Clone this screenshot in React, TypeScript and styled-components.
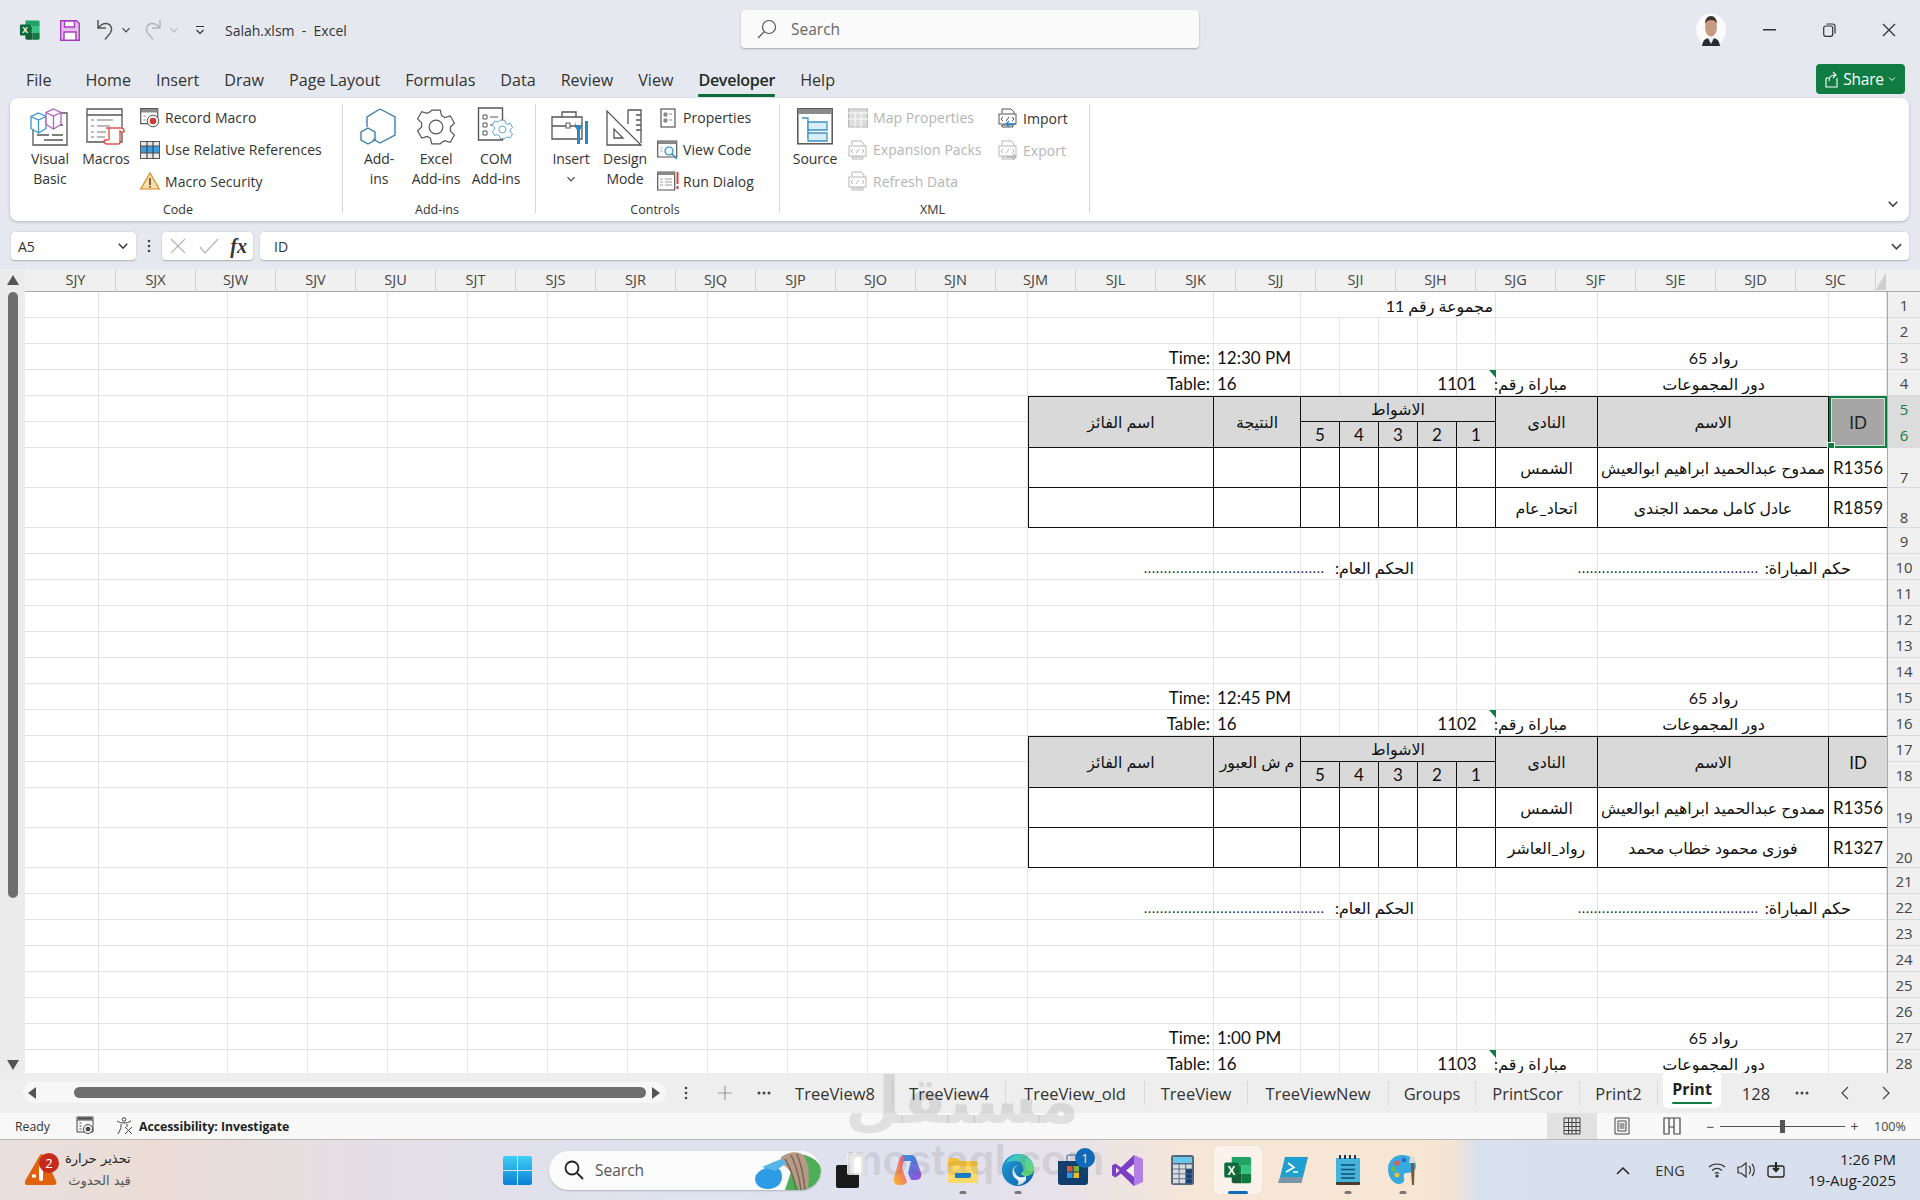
import React from 'react';
import styled, { createGlobalStyle } from 'styled-components';

const UI = `"Open Sans","DejaVu Sans",sans-serif`;
const CELL = `Lato,"DejaVu Sans",sans-serif`;

const Global = createGlobalStyle`
  html, body { margin: 0; padding: 0; background: #e6e8ef; }
  * { box-sizing: border-box; }
`;

const Page = styled.div`
  position: relative; width: 1920px; height: 1200px; overflow: hidden;
  background: #e6e8ef; font-family: ${UI}; color: #222; display: flex; flex-direction: column;
`;

/* ---------- Title bar ---------- */
const TitleBar = styled.div`
  height: 58px; display: grid; grid-template-columns: 741px 458px 1fr; align-items: center; flex: none; padding-top: 2px;
`;
const Qat = styled.div`display: flex; align-items: center; padding-left: 18px; height: 100%;`;
const QatSlot = styled.div<{ $w: number }>`width: ${p => p.$w}px; display: flex; align-items: center; justify-content: center; flex: none;`;
const DocTitle = styled.div`font-size: 14px; color: #333; white-space: pre; margin-left: 16px; letter-spacing: 0;`;
const SearchBox = styled.div`
  height: 38px; margin-top: -2px; background: #fafafa; border-radius: 4px; box-shadow: 0 1px 2px rgba(0,0,0,.28);
  display: flex; align-items: center; padding-left: 16px; gap: 14px; font-size: 15.5px; color: #666;
`;
const WinControls = styled.div`display: flex; align-items: center; justify-content: flex-end; height: 100%; padding-right: 0;`;
const WinBtn = styled.div<{ $w: number }>`width: ${p => p.$w}px; display: flex; align-items: center; justify-content: center; flex: none;`;

/* ---------- Ribbon tabs ---------- */
const TabRow = styled.div`height: 40px; display: flex; align-items: center; padding-left: 26px; position: relative; flex: none;`;
const RTab = styled.div<{ $active?: boolean; $ml?: number }>`
  font-size: 16.1px; margin-left: ${p => p.$ml ?? 25}px; position: relative; height: 40px; line-height: 44px;
  color: ${p => (p.$active ? '#1e2b24' : '#333')}; font-weight: ${p => (p.$active ? 600 : 400)}; letter-spacing: ${p => (p.$active ? '-.3px' : '0')};
  &::after { content: ''; display: ${p => (p.$active ? 'block' : 'none')}; position: absolute; left: 0; right: 0; bottom: 1px; height: 3px; background: #0e6b3b; border-radius: 1px; }
`;
const ShareBtn = styled.div`
  position: absolute; left: 1816px; top: 6px; width: 89px; height: 30px; background: #107c41; border-radius: 4px; color: #fff;
  display: flex; align-items: center; justify-content: center; gap: 4px; font-size: 15.5px; letter-spacing: -.2px;
`;

/* ---------- Ribbon ---------- */
const Ribbon = styled.div`
  margin-left: 10px; width: 1899px; height: 123px; background: #fff; border-radius: 8px; box-shadow: 0 1px 3px rgba(0,0,0,.22);
  display: flex; padding-top: 6px; position: relative; flex: none;
`;
const Group = styled.div<{ $w: number; $pl: number }>`
  width: ${p => p.$w}px; height: 109px; border-right: 1px solid #d8d8d8; padding-left: ${p => p.$pl}px; display: flex; flex-direction: column; flex: none;
`;
const Tools = styled.div`display: flex; height: 91px;`;
const GroupLabel = styled.div<{ $mr: number }>`
  margin-top: auto; margin-bottom: -6px; margin-right: ${p => p.$mr}px; text-align: center; font-size: 12.5px; line-height: 18px; color: #333;
`;
const Big = styled.div<{ $w: number }>`width: ${p => p.$w}px; display: flex; flex-direction: column; align-items: center; flex: none;`;
const BigIcon = styled.div`height: 45px; display: flex; align-items: center; justify-content: center;`;
const BigLabel = styled.div`font-size: 14px; line-height: 20px; text-align: center; white-space: nowrap; color: #333; letter-spacing: -.1px;`;
const SmallCol = styled.div<{ $w?: number; $ml?: number }>`
  display: flex; flex-direction: column; gap: 4px; margin-left: ${p => p.$ml ?? 0}px; width: ${p => (p.$w ? p.$w + 'px' : 'auto')}; flex: none;
`;
const Small = styled.div<{ $off?: boolean }>`
  height: 28px; display: flex; align-items: center; gap: 3px; font-size: 14px; white-space: nowrap; letter-spacing: .05px;
  color: ${p => (p.$off ? '#b4b4b4' : '#333')};
`;
const SmallIcon = styled.div`width: 24px; display: flex; align-items: center; justify-content: center; flex: none;`;
const Collapse = styled.div`position: absolute; right: 10px; bottom: 11px; display: flex;`;

/* ---------- Formula bar ---------- */
const FormulaRow = styled.div`height: 28px; margin: 11px 0 9px 11px; display: flex; align-items: stretch; flex: none;`;
const Boxed = styled.div<{ $w?: number }>`
  background: #fff; border-radius: 4px; box-shadow: 0 0.5px 1.5px rgba(0,0,0,.25); display: flex; align-items: center;
  width: ${p => (p.$w ? p.$w + 'px' : 'auto')}; flex: ${p => (p.$w ? 'none' : 1)};
`;
const NameBox = styled(Boxed)`padding: 0 7px; justify-content: space-between; font-size: 14px; color: #333;`;
const FxBox = styled(Boxed)`justify-content: space-between; padding: 0 6px 0 7px;`;
const FormulaInput = styled(Boxed)`margin-left: 7px; margin-right: 11px; padding: 0 6px 0 14px; justify-content: space-between; font-size: 14px; color: #333;`;
const VDots = styled.div`width: 26px; display: flex; align-items: center; justify-content: center;`;
const Fx = styled.span`font-family: "Liberation Serif",serif; font-style: italic; font-size: 20px; color: #333; font-weight: 700;`;

/* ---------- Sheet ---------- */
const Workbook = styled.div`height: 804px; display: flex; flex: none; background: #f0f0f0;`;
const VScroll = styled.div`width: 25px; flex: none; display: flex; flex-direction: column; align-items: center; padding: 6px 0 3px; position: relative; background: #ececec;`;
const VThumb = styled.div`width: 10px; height: 606px; margin-top: 7px; background: #6e6e6e; border-radius: 5px;`;
const VGrow = styled.div`flex: 1;`;
const SheetMain = styled.div`flex: 1; display: flex; flex-direction: column; min-width: 0;`;
const ColHeads = styled.div`height: 23px; display: flex; padding-left: 11px; background: #f0f0f0; border-bottom: 1px solid #aaa; flex: none; position: relative;`;
const ColHead = styled.div`width: 80px; border-right: 1px solid #d2d2d2; text-align: center; font-size: 14.5px; line-height: 22px; color: #444; flex: none;`;
const Corner = styled.div`width: 0; height: 0; margin: 3px 0 0 0; border-style: solid; border-width: 0 0 18px 10px; border-color: transparent transparent #cfcfcf transparent;`;
const Body = styled.div`flex: 1; display: flex; overflow: hidden;`;
const Grid = styled.div`
  width: 1862px; flex: none; background: #fff; display: grid; height: 781px; overflow: hidden; font-family: ${CELL}; color: #111;
  grid-template-columns: 74px 129px repeat(10, 80px) 186px 87px repeat(5, 39px) 102px 231px 58px;
  grid-template-rows: repeat(6, 26px) 40px 40px repeat(10, 26px) 40px 40px repeat(8, 26px);
`;
type Pos = { $c: number; $r: number; $cs?: number; $rs?: number };
const at = (p: Pos) => `grid-column: ${p.$c} / span ${p.$cs ?? 1}; grid-row: ${p.$r} / span ${p.$rs ?? 1};`;
const Line = styled.div<Pos>`${at} border-right: 1px solid #e3e3e3; border-bottom: 1px solid #e3e3e3;`;
const Blank = styled.div<Pos>`${at} background: #fff; border-right: 1px solid #e3e3e3; border-bottom: 1px solid #e3e3e3;`;
const Txt = styled.div<Pos & { $a?: string; $pr?: number; $pl?: number; $ar?: boolean }>`
  ${at} display: flex; align-items: center; white-space: nowrap; min-width: 0; position: relative;
  justify-content: ${p => p.$a ?? 'center'}; padding-right: ${p => p.$pr ?? 0}px; padding-left: ${p => p.$pl ?? 0}px; padding-top: 1px;
  font-size: ${p => (p.$ar ? 16 : 17)}px; ${p => (p.$ar ? 'direction: rtl;' : '')}
`;
const Tc = styled.div<Pos & { $head?: boolean; $left?: boolean; $top?: boolean; $ar?: boolean; $nb?: boolean }>`
  ${at} display: flex; align-items: center; justify-content: center; white-space: nowrap; overflow: hidden; position: relative;
  background: ${p => (p.$head ? '#d9d9d9' : '#fff')}; border-right: ${p => (p.$nb ? 0 : '1px solid #111')}; border-bottom: 1px solid #111;
  ${p => (p.$left ? 'border-left: 1px solid #111;' : '')} ${p => (p.$top ? 'border-top: 1px solid #111;' : '')}
  font-size: ${p => (p.$ar ? 15.8 : 17)}px; ${p => (p.$ar ? 'direction: rtl;' : '')}
`;
const SelCell = styled.div<Pos>`
  ${at} position: relative; background: #a6a6a6; border: 2px solid #107c41; outline: 1px solid #cfe3d8; outline-offset: -3px; display: flex; align-items: center; justify-content: center; font-size: 17px; color: #222;
`;
const Handle = styled.span`position: absolute; left: -4px; bottom: -4px; width: 6px; height: 6px; background: #107c41; border: 1px solid #fff; box-sizing: content-box;`;
const Flag = styled.span`
  position: absolute; right: 0; top: 0; width: 0; height: 0; border-style: solid; border-width: 0 7px 8px 0; border-color: transparent #107c41 transparent transparent;
`;
const Dots = styled.span`font-family: ${CELL}; font-size: 13px; letter-spacing: .95px; direction: ltr;`;
const RowHeads = styled.div`width: 33px; flex: none; border-left: 1px solid #aaa; background: #f0f0f0; display: flex; flex-direction: column;`;
const RowHead = styled.div<{ $h: number; $sel?: boolean }>`
  height: ${p => p.$h}px; flex: none; display: flex; justify-content: center; font-size: 15px; color: ${p => (p.$sel ? '#107c41' : '#444')};
  align-items: ${p => (p.$h > 30 ? 'flex-end' : 'center')}; border-bottom: 1px solid #dadada; background: ${p => (p.$sel ? '#dcdcdc' : 'transparent')}; letter-spacing: -.2px;
`;

/* ---------- Sheet tabs ---------- */
const TabBar = styled.div`height: 40px; background: #efeeee; display: flex; align-items: flex-start; flex: none; position: relative;`;
const HPill = styled.div`
  margin: 9px 0 0 23px; width: 643px; height: 21px; background: #f7f7f7; border-radius: 10px; display: flex; align-items: center; padding: 0 3px 0 5px; gap: 0; flex: none;
`;
const HThumb = styled.div`width: 572px; height: 11px; background: #6e6e6e; border-radius: 6px; margin: 0 6px 0 38px;`;
const BarTool = styled.div<{ $w: number }>`width: ${p => p.$w}px; height: 40px; display: flex; align-items: center; justify-content: center; flex: none;`;
const TabList = styled.div`display: flex; align-items: flex-start; margin-left: -6px; flex: none;`;
const SheetTab = styled.div<{ $w: number; $active?: boolean; $nob?: boolean }>`
  width: ${p => p.$w}px; flex: none; height: ${p => (p.$active ? '35px' : '24px')}; margin-top: ${p => (p.$active ? '0' : '8px')};
  border-right: ${p => (p.$active || p.$nob ? '0' : '1px solid #dadada')};
  display: flex; justify-content: center; align-items: center; font-size: 16.5px; color: #333; white-space: nowrap; position: relative;
  ${p => p.$active ? 'background: #fff; font-weight: 700; font-size: 16px; color:#222; border-radius: 0 0 5px 5px; padding-bottom: 3px; width:58px; margin: 0 6px 0 5px;' : ''}
  ${p => p.$active ? `&::after { content:''; position:absolute; left:9px; right:9px; bottom:4px; height:2.5px; background:#107c41; border-radius:1px; }` : ''}
`;

/* ---------- Status bar ---------- */
const StatusBar = styled.div`
  height: 27px; background: #f8f8f8; border-bottom: 1px solid #bdb7b2; display: flex; align-items: center; flex: none; font-size: 12.3px; color: #333; position: relative;
`;
const Ready = styled.span`margin-left: 15px; width: 55px;`;
const StatusIco = styled.div<{ $w: number }>`width: ${p => p.$w}px; display: flex; align-items: center; justify-content: center; flex: none; height: 26px;`;
const Acc = styled.span`font-weight: 700; color: #222; letter-spacing: -.03px; margin-left: 3px;`;
const StatusRight = styled.div`margin-left: auto; display: flex; align-items: center; height: 26px;`;
const ViewBtn = styled.div<{ $active?: boolean }>`
  width: 50px; height: 26px; display: flex; align-items: center; justify-content: center; background: ${p => (p.$active ? '#e2e2e2' : 'transparent')}; flex: none;
`;
const Zoomer = styled.div`margin-left: 4px; display: flex; align-items: center; flex: none; color: #444; font-size: 14px;`;
const ZoomMark = styled.span`width: 19px; text-align: center; flex: none;`;
const Track = styled.div`width: 125px; height: 1px; background: #555; position: relative; flex: none;`;
const Knob = styled.span`position: absolute; left: 60px; top: -6px; width: 5px; height: 13px; background: #555;`;
const ZoomPct = styled.span`width: 46px; margin-left: 10px; font-size: 12.5px; color: #444; white-space: nowrap;`;

/* ---------- Taskbar ---------- */
const Taskbar = styled.div`
  height: 60px; flex: none; display: flex; align-items: center;
  background: linear-gradient(90deg, #e9dfdc 0%, #ebdcd6 8%, #e2dfe8 22%, #dfe2ef 35%, #e0e1ee 48%, #e6e2ea 55%, #f6e6d8 62%, #f7e6d2 74%, #f4e4d4 75.5%, #d9e0ee 77%, #d7dfec 100%);
  position: relative;
`;
const Weather = styled.div`width: 490px; flex: none; display: flex; align-items: center; padding-left: 25px; gap: 10px;`;
const WeatherIcon = styled.div`position: relative; width: 30px; height: 38px; flex: none;`;
const Badge = styled.span<{ $bg: string }>`
  position: absolute; display: flex; align-items: center; justify-content: center; width: 20px; height: 20px; border-radius: 50%;
  background: ${p => p.$bg}; color: #fff; font-size: 13px; line-height: 1;
`;
const RedBadge = styled(Badge)`left: 14px; top: 2px;`;
const BlueBadge = styled(Badge)`position: absolute !important; right: 5px; top: 2px;`;
const WeatherText = styled.div`direction: rtl; display: flex; flex-direction: column; font-family: "DejaVu Sans",sans-serif; font-size: 13px; line-height: 22px; color: #222; text-align: right;`;
const WeatherSub = styled.span`color: #555;`;
const SearchPill = styled.div`
  margin-left: 4px; width: 272px; height: 39px; border-radius: 20px; box-shadow: 0 1px 2px rgba(0,0,0,.2); display: flex; align-items: center; padding-left: 15px; gap: 11px;
  font-size: 15.5px; color: #555; position: relative; overflow: hidden; flex: none; background: #fbfbfc;
`;
const PillArt = styled.div`position: absolute; right: 0; top: 0; height: 39px; display: flex;`;
const Slot = styled.div<{ $active?: boolean; $w?: number }>`
  width: ${p => p.$w ?? 55}px; height: 48px; flex: none; display: flex; align-items: center; justify-content: center; position: relative;
  ${p => p.$active ? `&::before { content:''; position:absolute; left:3.5px; right:3.5px; top:0; bottom:0; background: rgba(255,255,255,.5); border-radius:5px; box-shadow:0 0 1px rgba(0,0,0,.15);} ` : ''}
  & > svg { position: relative; }
`;
const Pip = styled.span<{ $on?: boolean }>`
  position: absolute; bottom: 0px; left: 50%; transform: translateX(-50%); height: 3.5px; border-radius: 2px;
  width: ${p => (p.$on ? 20 : 7)}px; background: ${p => (p.$on ? '#0f6cbd' : '#777')};
`;
const Tray = styled.div`margin-left: auto; display: flex; align-items: center; padding-right: 24px; height: 100%;`;
const TrayItem = styled.div<{ $w: number }>`width: ${p => p.$w}px; display: flex; justify-content: center; align-items: center; flex: none; font-size: 14.5px; color: #333;`;
const Clock = styled.div`width: 100px; margin-left: 5px; text-align: right; font-size: 15px; line-height: 21px; color: #222; white-space: nowrap; direction: rtl;`;
const ClockLine = styled.div`direction: ltr; text-align: right; margin-left: -6px;`;

const Watermark = styled.div`
  position: absolute; left: 845px; top: 1062px; width: 232px; text-align: center; pointer-events: none; color: rgba(80,80,85,.14); font-weight: 700; white-space: nowrap;
`;
const WmAr = styled.div`font-family: "DejaVu Sans",sans-serif; font-size: 64px; line-height: 78px;`;
const WmEn = styled.div`font-family: "Liberation Sans",sans-serif; font-size: 42px; line-height: 42px;`;

/* ---------- Icons ---------- */
const G = '#555';
const Chevron = ({ c = '#444', s = 10 }: { c?: string; s?: number }) => (
  <svg width={s} height={s} viewBox="0 0 10 10"><path d="M1.5 3.2 5 6.8 8.5 3.2" fill="none" stroke={c} strokeWidth="1.2" /></svg>
);
const ExcelGlyph = ({ s = 22 }: { s?: number }) => (
  <svg width={s} height={s} viewBox="0 0 24 24">
    <path d="M7 1.5h14a1.5 1.5 0 0 1 1.5 1.5v5.5H7z" fill="#21a366" />
    <path d="M7 8.5h7.7V15H7z" fill="#107c41" /><path d="M14.7 8.5h7.8V15h-7.8z" fill="#33c481" />
    <path d="M14.7 15h7.8v6a1.5 1.5 0 0 1-1.5 1.5h-6.3z" fill="#107c41" /><path d="M7 15h7.7v7.5H8.5A1.5 1.5 0 0 1 7 21z" fill="#185c37" />
    <rect x="1" y="6" width="11.5" height="12" rx="1.2" fill="#0f6b3a" />
    <text x="6.75" y="15.6" fontSize="9.5" fontWeight="700" textAnchor="middle" fill="#fff" fontFamily="Liberation Sans">X</text>
  </svg>
);
const SaveIcon = () => (
  <svg width="20" height="21" viewBox="0 0 20 21">
    <path d="M.7.7h15.8l2.8 2.8v16.8H.7z" fill="#e6bdee" stroke="#a93cbc" strokeWidth="1.4" />
    <path d="M4.5 1h10v6h-10zM4 12h12v8.2H4z" fill="#fff" stroke="#a93cbc" strokeWidth="1.4" />
  </svg>
);
const Undo = ({ c, flip }: { c: string; flip?: boolean }) => (
  <svg width="20" height="24" viewBox="0 0 20 24" style={flip ? { transform: 'scaleX(-1)' } : undefined}>
    <path d="M3 2v8h8M3 10c3-3.5 6-5 9-4.400 4 .9 6 5.400 3.500 9L10 21.500" fill="none" stroke={c} strokeWidth="1.500" />
  </svg>
);
const Cube = ({ x, y, c }: { x: number; y: number; c: string }) => (
  <g transform={`translate(${x} ${y})`} fill="none" stroke={c} strokeWidth="1.300">
    <path d="M7.500 0 15 3.500v12L7.500 20 0 15.500v-12z" fill="#fff" />
    <path d="M0 3.500 7.500 7 15 3.500M7.500 7v13" />
  </g>
);
const VbIcon = () => (
  <svg width="40" height="38" viewBox="0 0 40 38">
    <path d="M28 5h9v32H3V22M7 27h12M22 27h11M14 32h19M26 17h7" fill="none" stroke={G} strokeWidth="1.300" />
    <Cube x={1} y={5} c="#3a96c8" />
    <Cube x={16} y={1} c="#b25ec8" />
  </svg>
);
const MacrosIcon = () => (
  <svg width="40" height="38" viewBox="0 0 40 38">
    <path d="M1 1h35v33H1zM1 7h35" fill="none" stroke={G} strokeWidth="1.300" />
    <path d="M5 12h3M11 12h16M5 18h3M11 18h13M5 24h3M11 24h9M5 29h3M11 29h8" stroke="#777" strokeWidth="1.200" fill="none" />
    <path d="M20 20h15a3 3 0 0 1 3 3v1h-4v10a2 2 0 0 1-2 2H21a2.500 2.500 0 0 1-2.500-2.500V32h4" fill="#fff" stroke="#e0544d" strokeWidth="1.400" />
    <path d="M23 20v12M34 24v-2" stroke="#e0544d" strokeWidth="1.400" fill="none" />
  </svg>
);
const RecordIcon = () => (
  <svg width="20" height="20" viewBox="0 0 20 20">
    <path d="M.7.7h17v15H.7z" fill="#fff" stroke={G} strokeWidth="1.200" />
    <path d="M1 1h16.500v3.500H1z" fill="#8a8a8a" />
    <path d="M3.500 8h2M3.500 12h2" stroke="#777" strokeWidth="1.200" />
    <circle cx="13" cy="13" r="5.800" fill="#fff" stroke={G} strokeWidth="1" /><circle cx="13" cy="13" r="3.300" fill="#d43a3a" />
  </svg>
);
const RelIcon = () => (
  <svg width="20" height="18" viewBox="0 0 20 18">
    <rect x=".5" y=".5" width="19" height="17" fill="#3b9ce0" stroke="#555" />
    <path d="M.5 5h19v-4.500H.5zM.5 12h19v5.500H.5z" fill="#e8e8e8" stroke="#555" />
    <path d="M7 0v18M13 0v18" stroke="#333" strokeWidth="1" />
  </svg>
);
const WarnIcon = () => (
  <svg width="20" height="18" viewBox="0 0 20 18">
    <path d="M10 1 19.300 17H.7z" fill="#fcdca8" stroke="#d98a1f" strokeWidth="1.200" />
    <path d="M10 6v7" stroke="#333" strokeWidth="1.400" /><circle cx="10" cy="14.800" r=".9" fill="#333" />
  </svg>
);
const AddinsIcon = () => (
  <svg width="38" height="38" viewBox="0 0 38 38" fill="none" stroke="#3c7fb1" strokeWidth="1.400">
    <path d="M20 1 35 9v18L20 35 13 31M7 19V9L20 1" />
    <path d="M8 20 15 24v8L8 36 1 32v-8z" />
  </svg>
);
const Gear = ({ s, c, sw = 1.2 }: { s: number; c: string; sw?: number }) => (
  <svg width={s} height={s} viewBox="0 0 36 36" fill="none" stroke={c} strokeWidth={sw * 36 / s}>
    <circle cx="18" cy="18" r="6.500" />
    <path d="M14 2h8l1.300 5.300 3 1.700 5.200-1.500 4 6.900-3.900 3.700v3.800l3.900 3.700-4 6.900-5.200-1.500-3 1.700L22 34h-8l-1.300-5.300-3-1.700-5.200 1.500-4-6.900 3.900-3.700v-3.800l-3.900-3.700 4-6.900 5.200 1.500 3-1.700z" />
  </svg>
);
function Gearish() {
  return (
    <g fill="#fff" stroke="#3c8fc4" strokeWidth="1.400" transform="scale(.58)">
      <path d="M14 2h8l1.300 5.300 3 1.700 5.200-1.500 4 6.900-3.900 3.700v3.800l3.900 3.700-4 6.900-5.200-1.500-3 1.700L22 34h-8l-1.300-5.300-3-1.700-5.200 1.500-4-6.900 3.900-3.700v-3.800l-3.900-3.700 4-6.900 5.200 1.500 3-1.700z" />
      <circle cx="18" cy="18" r="6" />
    </g>
  );
}
const ComIcon = () => (
  <svg width="38" height="40" viewBox="0 0 38 40">
    <path d="M1.500 1h24v32H1.500z" fill="#fff" stroke={G} strokeWidth="1.400" />
    <path d="M6 8h4v4H6zM6 16h4v4H6zM6 24h4v4H6z" fill="none" stroke={G} />
    <path d="M13 10h8M13 18h4" stroke={G} />
    <g transform="translate(15 12)"><Gearish /></g>
  </svg>
);
const InsertIcon = () => (
  <svg width="40" height="38" viewBox="0 0 40 38">
    <path d="M1 9h30v22H1zM1 18h14M19 18h10M11 9V4h14v5" fill="none" stroke={G} strokeWidth="1.300" />
    <rect x="15" y="15" width="4" height="5" fill="#fff" stroke={G} />
    <path d="M24 14v5l2 3v14h3V22l2-3v-5l-1 3h-5z" fill="#2f86c5" />
    <path d="M34 13h3v9h-3zM34 22h3v14h-3z" fill="#2f86c5" />
  </svg>
);
const DesignIcon = () => (
  <svg width="38" height="38" viewBox="0 0 38 38" fill="none" stroke={G} strokeWidth="1.300">
    <path d="M1 3v34h34zM8 21v9h9z" />
    <path d="M22 2h13v33M22 2v14" />
    <path d="M30 7h5M30 12h5M30 17h5M30 22h5" />
  </svg>
);
const PropIcon = () => (
  <svg width="16" height="20" viewBox="0 0 16 20">
    <rect x="1" y="1" width="14" height="18" fill="#fff" stroke={G} strokeWidth="1.200" />
    <path d="M4 5h3v3H4zM4 11h3v3H4zM9 6h3M9 12h3" fill="#888" stroke="#888" />
  </svg>
);
const ViewCodeIcon = () => (
  <svg width="22" height="20" viewBox="0 0 22 20">
    <path d="M.7 1h19v16H.7z" fill="#fff" stroke={G} strokeWidth="1.200" /><path d="M1 1h18.500v3H1z" fill="#888" />
    <path d="M3.500 8h2M3.500 11h2" stroke="#999" />
    <circle cx="12" cy="11" r="4" fill="#eaf5fb" stroke="#2f86c5" strokeWidth="1.200" />
    <path d="M15 14l5 5" stroke="#2f86c5" strokeWidth="1.400" />
  </svg>
);
const RunIcon = () => (
  <svg width="22" height="20" viewBox="0 0 22 20">
    <path d="M.7 1h17v18H.7z" fill="#fff" stroke={G} strokeWidth="1.200" /><path d="M1 1h16.500v3H1z" fill="#888" />
    <path d="M3 8h3M8 8h7M3 11h3M8 11h7M3 14h3M8 14h7" stroke="#999" />
    <path d="M20.500 1v12" stroke="#d9433c" strokeWidth="2" /><path d="M20.500 15v3" stroke="#d9433c" strokeWidth="2" />
  </svg>
);
const SourceIcon = () => (
  <svg width="36" height="37" viewBox="0 0 36 37">
    <rect x=".8" y=".8" width="34.400" height="35" fill="#fff" stroke={G} strokeWidth="1.500" />
    <path d="M1 1h34v5H1z" fill="#8a8a8a" />
    <path d="M5 10h6v20" fill="none" stroke="#3f93c4" strokeWidth="1.300" />
    <path d="M11 14h19v8H11zM11 25h19v8H11z" fill="#d8eef8" stroke="#3f93c4" strokeWidth="1.300" />
  </svg>
);
const XmlDoc = ({ c, arrow, right }: { c: string; arrow?: string; right?: boolean }) => (
  <svg width="20" height="20" viewBox="0 0 20 20" fill="none" stroke={c}>
    <path d="M4 5V1h9l3 3v2" />
    <rect x="1" y="6" width="17" height="10" fill="#fff" />
    <path d="M5 9 3 11l2 2M14 9l2 2-2 2M8 13 11 9" />
    <path d="M4 17h11v2H4z" />
    {arrow && <path d={right ? 'M9 17h9m-3-3 3 3-3 3' : 'M8 16h10M8 16l3-3M8 16l3 3'} stroke={arrow} strokeWidth="1.300" />}
  </svg>
);
const MapIcon = () => (
  <svg width="20" height="20" viewBox="0 0 20 20">
    <rect x=".5" y="1" width="19" height="18" fill="#dcdcdc" stroke="#b5b5b5" />
    <path d="M0 5h20M7 5v14M13 5v14M0 11h20" stroke="#fff" />
  </svg>
);

const TaskWin = () => (
  <svg width="29" height="29" viewBox="0 0 29 29">
    <defs><linearGradient id="w" x1="0" y1="0" x2="0" y2="1"><stop offset="0" stopColor="#3fd0f4" /><stop offset="1" stopColor="#0b7fd6" /></linearGradient></defs>
    <path d="M0 1.500 1.500 0H14v14H0zM15 0h12.500L29 1.500V14H15zM0 15h14v14H1.500L0 27.500zM15 15h14v12.500L27.500 29H15z" fill="url(#w)" />
  </svg>
);
const MagIcon = ({ s = 20, flip, c = '#222', sw = 1.800 }: { s?: number; flip?: boolean; c?: string; sw?: number }) => (
  <svg width={s} height={s} viewBox="0 0 20 20" fill="none" stroke={c} strokeWidth={sw} style={flip ? { transform: 'scaleX(-1)' } : undefined}>
    <circle cx="8" cy="8" r="6.500" /><path d="M13 13l6 6" />
  </svg>
);
const BingArt = () => (
  <svg width="66" height="39" viewBox="0 0 66 39">
    <path d="M42 3c10 0 24 6 24 17 0 11-10 19-20 19H30z" fill="#4dae57" />
    <path d="M26 6c8-6 18-6 22-2 5 5 7 18 5 33l-9 2C40 28 36 18 26 12z" fill="#b79a85" />
    <path d="M36 4c4 8 8 20 10 35M42 3c4 10 7 24 8 36M30 8c5 8 9 19 11 31" stroke="#7a6557" strokeWidth="1.500" fill="none" />
    <path d="M1 24c-3 7 2 14 12 14 8 0 14-5 14-12 0-4-1-7-4-9C15 15 6 17 1 24z" fill="#2e9be6" />
    <path d="M7 16 26 8 32 12 20 20z" fill="#57b6e8" />
  </svg>
);
const TaskView = () => (
  <svg width="32" height="36" viewBox="0 0 32 36">
    <rect x="1" y="13" width="23" height="23" rx="2" fill="#1a1a1a" />
    <rect x="12" y="1" width="19" height="22" rx="2" fill="#f4f4f4" opacity=".9" /><rect x="15" y="4" width="13" height="17" fill="#fff" />
  </svg>
);
const Copilot = () => (
  <svg width="30" height="32" viewBox="0 0 30 32">
    <defs>
      <linearGradient id="c1" x1="0" y1="0" x2="1" y2="1"><stop offset="0" stopColor="#1d9be8" /><stop offset="1" stopColor="#a24fd8" /></linearGradient>
      <linearGradient id="c2" x1="0" y1="1" x2="1" y2="0"><stop offset="0" stopColor="#f8b92c" /><stop offset="1" stopColor="#f04f9a" /></linearGradient>
    </defs>
    <path d="M9 1h9c3 0 4 2 5 4l5 14c1 4-1 7-5 7h-5l-3-7 3-12H9z" fill="url(#c1)" />
    <path d="M6 6c1-3 3-5 6-4L9 14l5 14c-1 2-3 3-5 3H6c-4 0-6-3-5-7z" fill="url(#c2)" />
  </svg>
);
const Folder = () => (
  <svg width="30" height="26" viewBox="0 0 30 26">
    <path d="M0 3a2 2 0 0 1 2-2h8l3 3h15a2 2 0 0 1 2 2v18a2 2 0 0 1-2 2H2a2 2 0 0 1-2-2z" fill="#f6c43c" />
    <path d="M0 9h30v15a2 2 0 0 1-2 2H2a2 2 0 0 1-2-2z" fill="#fbd96a" />
    <path d="M7 16h16v3a2 2 0 0 1-2 2H7z" fill="#1a7dc4" />
  </svg>
);
const Edge = () => (
  <svg width="32" height="32" viewBox="0 0 32 32">
    <defs>
      <linearGradient id="e1" x1="0" y1="0" x2="1" y2="1"><stop offset="0" stopColor="#1e9fd8" /><stop offset="1" stopColor="#0b5fa8" /></linearGradient>
      <linearGradient id="e2" x1="0" y1="0" x2="1" y2="1"><stop offset="0" stopColor="#34c0d8" /><stop offset="1" stopColor="#6fdc6a" /></linearGradient>
    </defs>
    <circle cx="16" cy="16" r="16" fill="url(#e1)" />
    <path d="M3 11C6 3 13 0 18 0c8 0 14 7 14 15 0 4-3 7-8 7-3 0-5-1-5-3 2-1 3-3 2-6-1-5-6-7-10-6-4 0-7 2-8 4z" fill="url(#e2)" />
    <path d="M13 17c0 6 5 10 11 9-2 3-5 5-9 5 3-2 0-7-3-10z" fill="#f6f3fa" opacity=".85" />
    <path d="M24 22c-5 3-12 0-12-6 0-3 3-5 6-5-5 0-9 4-7 10 2 5 8 7 13 5z" fill="#f4f7fb" />
  </svg>
);
const Store = () => (
  <svg width="30" height="32" viewBox="0 0 30 32">
    <path d="M0 7h30v21a3 3 0 0 1-3 3H3a3 3 0 0 1-3-3z" fill="#0f3e6e" />
    <path d="M9 7V3a2 2 0 0 1 2-2h8a2 2 0 0 1 2 2v4" fill="none" stroke="#6d8faf" strokeWidth="1.600" />
    <rect x="9" y="12" width="5.500" height="5.500" fill="#e65a36" /><rect x="15.500" y="12" width="5.500" height="5.500" fill="#7ab92f" />
    <rect x="9" y="18.500" width="5.500" height="5.500" fill="#2f9ce4" /><rect x="15.500" y="18.500" width="5.500" height="5.500" fill="#f5bc21" />
  </svg>
);
const VsIcon = () => (
  <svg width="31" height="31" viewBox="0 0 31 31">
    <path d="M22 0 31 4v23l-9 4-13-13 13-9z" fill="#b27fe6" />
    <path d="M22 0 9 12.500 3.500 8.500 0 10.500v10l3.500 2 5.500-4L22 31V0zM4 12.500l3.500 3L4 18.500z" fill="#7b3fc6" />
    <path d="M22 9v13l-8-6.500z" fill="#f8f0e8" />
  </svg>
);
const Calc = () => (
  <svg width="23" height="30" viewBox="0 0 23 30">
    <rect width="23" height="30" rx="2.500" fill="#58677a" />
    <rect x="2" y="2" width="19" height="6" fill="#69c7e8" />
    {[0, 1, 2].map(i => [0, 1, 2, 3].map(j => (
      <rect key={i + '' + j} x={2 + i * 6.600} y={9.500 + j * 4.900} width="5.600" height="4" fill={i === 2 && j > 0 ? '#14437c' : '#d9dde0'} />
    )))}
  </svg>
);
const Ps = () => (
  <svg width="30" height="26" viewBox="0 0 30 26">
    <path d="M7 0h23l-5 20H2z" fill="#1f9ed0" />
    <path d="M2 20h23l-1.500 6H0z" fill="#7b95a4" />
    <path d="M10 6l6 4.500-8 4.500M15 15h5" fill="none" stroke="#fff" strokeWidth="1.600" />
  </svg>
);
const Notepad = () => (
  <svg width="24" height="30" viewBox="0 0 24 30">
    <path d="M0 3h24v24H0z" fill="#45b4dc" />
    <path d="M3 0v4M8 0v4M13 0v4M18 0v4" stroke="#1d3a4e" strokeWidth="2" transform="translate(1 0)" />
    <path d="M0 27h24v2a1 1 0 0 1-1 1H1a1 1 0 0 1-1-1z" fill="#4a3b2e" />
    <path d="M5 10h14M5 14.500h14M5 19h14M5 23h14" stroke="#0f4e72" strokeWidth="1.600" />
  </svg>
);
const Paint = () => (
  <svg width="29" height="30" viewBox="0 0 29 30">
    <path d="M14 0c9 0 14 5 14 11 0 5-5 7-9 7-3 0-4 2-3 5 1 3-1 6-5 6C5 29 0 22 0 14 0 6 6 0 14 0z" fill="#36a9e1" />
    <circle cx="9" cy="8" r="2.600" fill="#e85a4f" /><circle cx="5.500" cy="14" r="2.600" fill="#6fb83f" /><circle cx="9" cy="20" r="2.500" fill="#f3c02b" /><circle cx="16" cy="5" r="2.300" fill="#2b6cb8" />
    <path d="M23 8h3l.5 7-.5 15h-2l-1-15z" fill="#7a5a3c" />
    <path d="M22 2h4l1 6h-6z" fill="#d8d8d8" />
  </svg>
);
const Avatar = () => (
  <svg width="30" height="34" viewBox="0 0 30 34">
    <ellipse cx="15" cy="17" rx="15" ry="16.500" fill="#fafafa" />
    <path d="M6 33c1-6 3-8 9-8s8 2 9 8z" fill="#2a2c32" />
    <path d="M12 25l3 6 3-6z" fill="#eee" />
    <ellipse cx="15" cy="14" rx="6" ry="9.500" fill="#c49a80" />
    <path d="M9 11c0-5 2.500-8 6-8s6 3 6 8c-1-2.500-3-4-6-4s-5 1.500-6 4z" fill="#3b302a" />
  </svg>
);
const AccIcon = () => (
  <svg width="18" height="18" viewBox="0 0 18 18" fill="none" stroke="#444" strokeWidth="1">
    <circle cx="9" cy="2.500" r="1.800" /><path d="M2 4c3 1.500 4 2 7 2s4-.5 7-2M6 7v4l-3 6M12 7v3M10 10l7 7M17 10l-7 7" />
  </svg>
);
const MacroStat = () => (
  <svg width="18" height="20" viewBox="0 0 18 20" fill="none" stroke="#444">
    <path d="M1 1h16v15H1zM1 4h16" /><path d="M2 2.500h14" strokeWidth="2" /><path d="M3.500 7h2M3.500 10h2M3.500 13h2" />
    <circle cx="12" cy="13" r="4.500" fill="#fff" /><circle cx="12" cy="13" r="2" fill="#444" />
  </svg>
);
const ViewGrid = () => (
  <svg width="18" height="18" viewBox="0 0 18 18" fill="none" stroke="#444"><path d="M1 1h16v16H1zM1 5.500h16M1 9.500h16M1 13.500h16M5.500 1v16M9 1v16M13 1v16" /></svg>
);
const ViewPage = () => (
  <svg width="16" height="18" viewBox="0 0 16 18" fill="none" stroke="#444"><path d="M1 1h14v16H1zM4 4h8v10H4zM5.500 7h5M5.500 9h5M5.500 11h5" /></svg>
);
const ViewBreak = () => (
  <svg width="18" height="18" viewBox="0 0 18 18" fill="none" stroke="#444" strokeWidth="1.200"><path d="M1 1h16v16H11v-7H6v7H1z M6 1v9M11 1v9" /></svg>
);

const TabDots = () => (
  <svg width="14" height="4" viewBox="0 0 14 4" fill="#444"><circle cx="2" cy="2" r="1.500" /><circle cx="7" cy="2" r="1.500" /><circle cx="12" cy="2" r="1.500" /></svg>
);
const VDotsIcon = () => (
  <svg width="4" height="14" viewBox="0 0 4 14" fill="#444"><circle cx="2" cy="2" r="1.300" /><circle cx="2" cy="7" r="1.300" /><circle cx="2" cy="12" r="1.300" /></svg>
);
const Tri = ({ d, c = '#555' }: { d: 'u' | 'd' | 'l' | 'r'; c?: string }) => {
  const map = { u: '0 10 6 0 12 10', d: '0 0 12 0 6 10', l: '8 0 8 12 0 6', r: '0 0 8 6 0 12' };
  return <svg width={d === 'u' || d === 'd' ? 12 : 8} height={d === 'u' || d === 'd' ? 10 : 12}><polygon points={map[d]} fill={c} /></svg>;
};

/* ---------- Data ---------- */
const ROWH = [26, 26, 26, 26, 26, 26, 40, 40, 26, 26, 26, 26, 26, 26, 26, 26, 26, 26, 40, 40, 26, 26, 26, 26, 26, 26, 26, 26];
const LETTERS = 'SJY SJX SJW SJV SJU SJT SJS SJR SJQ SJP SJO SJN SJM SJL SJK SJJ SJI SJH SJG SJF SJE SJD SJC'.split(' ');

function MatchHead({ r, time, no }: { r: number; time: string; no: string }) {
  return (
    <>
      <Txt $c={13} $r={r} $a="flex-end" $pr={4}>Time:</Txt>
      <Txt $c={14} $cs={3} $r={r} $a="flex-start" $pl={3}>{time}</Txt>
      <Txt $c={21} $r={r} $ar>رواد 65</Txt>
      <Txt $c={13} $r={r + 1} $a="flex-end" $pr={4}>Table:</Txt>
      <Txt $c={14} $r={r + 1} $a="flex-start" $pl={3}>16</Txt>
      <Txt $c={18} $cs={2} $r={r + 1}>{no}<Flag /></Txt>
      <Txt $c={20} $r={r + 1} $ar $a="flex-start" $pr={31}>مباراة رقم:</Txt>
      <Txt $c={21} $r={r + 1} $ar>دور المجموعات</Txt>
    </>
  );
}

function MatchTable({ r, result, sel, rows }: { r: number; result: string; sel?: boolean; rows: [string, string, string][] }) {
  return (
    <>
      <Tc $c={13} $r={r} $rs={2} $head $left $top $ar>اسم الفائز</Tc>
      <Tc $c={14} $r={r} $rs={2} $head $top $ar>{result}</Tc>
      <Tc $c={15} $cs={5} $r={r} $head $top $ar>الاشواط</Tc>
      {[5, 4, 3, 2, 1].map((n, i) => <Tc key={n} $c={15 + i} $r={r + 1} $head>{n}</Tc>)}
      <Tc $c={20} $r={r} $rs={2} $head $top $ar>النادى</Tc>
      <Tc $c={21} $r={r} $rs={2} $head $top $ar>الاسم</Tc>
      {sel ? <SelCell $c={22} $r={r} $rs={2}>ID<Handle /></SelCell> : <Tc $c={22} $r={r} $rs={2} $head $top $nb>ID</Tc>}
      {rows.map((row, k) => (
        <React.Fragment key={k}>
          <Tc $c={13} $r={r + 2 + k} $left />
          <Tc $c={14} $r={r + 2 + k} />
          {[15, 16, 17, 18, 19].map(c => <Tc key={c} $c={c} $r={r + 2 + k} />)}
          <Tc $c={20} $r={r + 2 + k} $ar>{row[2]}</Tc>
          <Tc $c={21} $r={r + 2 + k} $ar>{row[1]}</Tc>
          <Tc $c={22} $r={r + 2 + k} $nb>{row[0]}</Tc>
        </React.Fragment>
      ))}
    </>
  );
}

const DOTS = '.............................................';

function Signatures({ r }: { r: number }) {
  return (
    <>
      <Txt $c={15} $cs={3} $r={r} $ar $a="flex-start" $pr={4}>الحكم العام:</Txt>
      <Txt $c={13} $cs={2} $r={r} $a="flex-start" $pl={116}><Dots>{DOTS}</Dots></Txt>
      <Txt $c={21} $cs={2} $r={r} $ar $a="flex-start" $pr={36}>حكم المباراة:</Txt>
      <Txt $c={20} $cs={2} $r={r} $a="flex-start" $pl={82}><Dots>{DOTS}</Dots></Txt>
    </>
  );
}

const App = () => (
  <Page>
    <Global />
    <TitleBar>
      <Qat>
        <QatSlot $w={24}><ExcelGlyph /></QatSlot>
        <QatSlot $w={17} />
        <QatSlot $w={22}><SaveIcon /></QatSlot>
        <QatSlot $w={13} />
        <QatSlot $w={22}><Undo c="#555" /></QatSlot>
        <QatSlot $w={20}><Chevron /></QatSlot>
        <QatSlot $w={6} />
        <QatSlot $w={22}><Undo c="#b5b5b5" flip /></QatSlot>
        <QatSlot $w={20}><Chevron c="#bbb" /></QatSlot>
        <QatSlot $w={7} />
        <QatSlot $w={18}>
          <svg width="12" height="11" viewBox="0 0 12 11" fill="none" stroke="#333" strokeWidth="1.200"><path d="M2 1.500h8M2.500 5 6 8.500 9.500 5" /></svg>
        </QatSlot>
        <DocTitle>Salah.xlsm  -  Excel</DocTitle>
      </Qat>
      <SearchBox><MagIcon s={20} flip c="#555" sw={1.200} />Search</SearchBox>
      <WinControls>
        <WinBtn $w={16} />
        <WinBtn $w={30}><Avatar /></WinBtn>
        <WinBtn $w={14} />
        <WinBtn $w={58}><svg width="13" height="2"><rect width="13" height="1.500" fill="#333" /></svg></WinBtn>
        <WinBtn $w={62}>
          <svg width="13" height="14" viewBox="0 0 13 14" fill="none" stroke="#333" strokeWidth="1.200"><rect x=".7" y="3" width="9" height="10.300" rx="2" /><path d="M3.500 1h6a2.500 2.500 0 0 1 2.500 2.500v7" /></svg>
        </WinBtn>
        <WinBtn $w={58}><svg width="14" height="14" viewBox="0 0 14 14" stroke="#333" strokeWidth="1.300"><path d="M1 1l12 12M13 1 1 13" /></svg></WinBtn>
        <WinBtn $w={2} />
      </WinControls>
    </TitleBar>

    <TabRow>
      <RTab $ml={0}>File</RTab>
      <RTab $ml={34}>Home</RTab>
      <RTab>Insert</RTab>
      <RTab>Draw</RTab>
      <RTab>Page Layout</RTab>
      <RTab>Formulas</RTab>
      <RTab>Data</RTab>
      <RTab>Review</RTab>
      <RTab>View</RTab>
      <RTab $active>Developer</RTab>
      <RTab>Help</RTab>
      <ShareBtn>
        <svg width="14" height="18" viewBox="0 0 14 18" fill="none" stroke="#fff" strokeWidth="1.100"><path d="M1 8h4M1 8v9h11V8M4 11c0-4 2-6 6-6M8 2l3 3-3 3" /></svg>
        Share
        <Chevron c="#fff" s={8} />
      </ShareBtn>
    </TabRow>

    <Ribbon>
      <Group $w={333} $pl={10}>
        <Tools>
          <Big $w={60}><BigIcon><VbIcon /></BigIcon><BigLabel>Visual<br />Basic</BigLabel></Big>
          <Big $w={52}><BigIcon><MacrosIcon /></BigIcon><BigLabel>Macros</BigLabel></Big>
          <SmallCol $ml={6}>
            <Small><SmallIcon><RecordIcon /></SmallIcon>Record Macro</Small>
            <Small><SmallIcon><RelIcon /></SmallIcon>Use Relative References</Small>
            <Small><SmallIcon><WarnIcon /></SmallIcon>Macro Security</Small>
          </SmallCol>
        </Tools>
        <GroupLabel $mr={6}>Code</GroupLabel>
      </Group>
      <Group $w={193} $pl={8}>
        <Tools>
          <Big $w={56}><BigIcon><AddinsIcon /></BigIcon><BigLabel>Add-<br />ins</BigLabel></Big>
          <Big $w={58}><BigIcon><Gear s={38} c={G} /></BigIcon><BigLabel>Excel<br />Add-ins</BigLabel></Big>
          <Big $w={62}><BigIcon><ComIcon /></BigIcon><BigLabel>COM<br />Add-ins</BigLabel></Big>
        </Tools>
        <GroupLabel $mr={12}>Add-ins</GroupLabel>
      </Group>
      <Group $w={244} $pl={8}>
        <Tools>
          <Big $w={54}><BigIcon><InsertIcon /></BigIcon><BigLabel>Insert<br /><Chevron /></BigLabel></Big>
          <Big $w={54}><BigIcon><DesignIcon /></BigIcon><BigLabel>Design<br />Mode</BigLabel></Big>
          <SmallCol $ml={4}>
            <Small><SmallIcon><PropIcon /></SmallIcon>Properties</Small>
            <Small><SmallIcon><ViewCodeIcon /></SmallIcon>View Code</Small>
            <Small><SmallIcon><RunIcon /></SmallIcon>Run Dialog</Small>
          </SmallCol>
        </Tools>
        <GroupLabel $mr={13}>Controls</GroupLabel>
      </Group>
      <Group $w={310} $pl={5}>
        <Tools>
          <Big $w={60}><BigIcon><SourceIcon /></BigIcon><BigLabel>Source</BigLabel></Big>
          <SmallCol $w={150} $ml={1}>
            <Small $off><SmallIcon><MapIcon /></SmallIcon>Map Properties</Small>
            <Small $off><SmallIcon><XmlDoc c="#b5b5b5" /></SmallIcon>Expansion Packs</Small>
            <Small $off><SmallIcon><XmlDoc c="#b5b5b5" /></SmallIcon>Refresh Data</Small>
          </SmallCol>
          <SmallCol>
            <Small><SmallIcon><XmlDoc c="#555" arrow="#2f86c5" /></SmallIcon>Import</Small>
            <Small $off><SmallIcon><XmlDoc c="#b5b5b5" arrow="#b5b5b5" right /></SmallIcon>Export</Small>
          </SmallCol>
        </Tools>
        <GroupLabel $mr={9}>XML</GroupLabel>
      </Group>
      <Collapse><Chevron c="#333" s={12} /></Collapse>
    </Ribbon>

    <FormulaRow>
      <NameBox $w={125}>A5<Chevron c="#333" s={12} /></NameBox>
      <VDots><VDotsIcon /></VDots>
      <FxBox $w={91}>
        <svg width="18" height="16" viewBox="0 0 18 16" stroke="#b5b5b5" strokeWidth="1.200"><path d="M2 1l14 14M16 1 2 15" /></svg>
        <svg width="20" height="16" viewBox="0 0 20 16" fill="none" stroke="#b5b5b5" strokeWidth="1.200"><path d="M1 9l5 6L19 1" /></svg>
        <Fx>fx</Fx>
      </FxBox>
      <FormulaInput>ID<Chevron c="#444" s={13} /></FormulaInput>
    </FormulaRow>

    <Workbook>
      <VScroll>
        <Tri d="u" />
        <VThumb />
        <VGrow />
        <Tri d="d" />
      </VScroll>
      <SheetMain>
        <ColHeads>
          {LETTERS.map(l => <ColHead key={l}>{l}</ColHead>)}
          <Corner />
        </ColHeads>
        <Body>
          <Grid>
            {ROWH.map((_, r) => Array.from({ length: 22 }).map((__, c) => <Line key={r + '-' + c} $c={c + 1} $r={r + 1} />))}
            <Blank $c={15} $cs={5} $r={1} />
            <Txt $c={15} $cs={5} $r={1} $ar $a="flex-start" $pr={3}>مجموعة رقم 11</Txt>
            <MatchHead r={3} time="12:30 PM" no="1101" />
            <MatchTable r={5} result="النتيجة" sel rows={[
              ['R1356', 'ممدوح عبدالحميد ابراهيم ابوالعيش', 'الشمس'],
              ['R1859', 'عادل كامل محمد الجندى', 'اتحاد_عام'],
            ]} />
            <Signatures r={10} />
            <MatchHead r={15} time="12:45 PM" no="1102" />
            <MatchTable r={17} result="م ش العبور" rows={[
              ['R1356', 'ممدوح عبدالحميد ابراهيم ابوالعيش', 'الشمس'],
              ['R1327', 'فوزى محمود خطاب محمد', 'رواد_العاشر'],
            ]} />
            <Signatures r={22} />
            <MatchHead r={27} time="1:00 PM" no="1103" />
          </Grid>
          <RowHeads>
            {ROWH.map((h, i) => <RowHead key={i} $h={h} $sel={i === 4 || i === 5}>{i + 1}</RowHead>)}
          </RowHeads>
        </Body>
      </SheetMain>
    </Workbook>

    <TabBar>
      <HPill>
        <Tri d="l" />
        <HThumb />
        <Tri d="r" />
      </HPill>
      <BarTool $w={39}><VDotsIcon /></BarTool>
      <BarTool $w={39}>
        <svg width="16" height="16" viewBox="0 0 16 16" stroke="#999" strokeWidth="1.200"><path d="M8 1v14M1 8h14" /></svg>
      </BarTool>
      <BarTool $w={40}><TabDots /></BarTool>
      <TabList>
        <SheetTab $w={115}>TreeView8</SheetTab>
        <SheetTab $w={113}>TreeView4</SheetTab>
        <SheetTab $w={139}>TreeView_old</SheetTab>
        <SheetTab $w={103}>TreeView</SheetTab>
        <SheetTab $w={141}>TreeViewNew</SheetTab>
        <SheetTab $w={87}>Groups</SheetTab>
        <SheetTab $w={104}>PrintScor</SheetTab>
        <SheetTab $w={78}>Print2</SheetTab>
        <SheetTab $w={69} $active>Print</SheetTab>
        <SheetTab $w={58} $nob>128</SheetTab>
        <BarTool $w={34}><TabDots /></BarTool>
        <BarTool $w={50}><svg width="9" height="14" viewBox="0 0 9 14" fill="none" stroke="#444" strokeWidth="1.200"><path d="M8 1 2 7l6 6" /></svg></BarTool>
        <BarTool $w={34}><svg width="9" height="14" viewBox="0 0 9 14" fill="none" stroke="#444" strokeWidth="1.200"><path d="M1 1l6 6-6 6" /></svg></BarTool>
      </TabList>
    </TabBar>

    <StatusBar>
      <Ready>Ready</Ready>
      <StatusIco $w={30}><MacroStat /></StatusIco>
      <StatusIco $w={12} />
      <StatusIco $w={24}><AccIcon /></StatusIco>
      <Acc>Accessibility: Investigate</Acc>
      <StatusRight>
        <ViewBtn $active><ViewGrid /></ViewBtn>
        <ViewBtn><ViewPage /></ViewBtn>
        <ViewBtn><ViewBreak /></ViewBtn>
        <Zoomer>
          <ZoomMark>−</ZoomMark>
          <Track><Knob /></Track>
          <ZoomMark>+</ZoomMark>
        </Zoomer>
        <ZoomPct>100%</ZoomPct>
      </StatusRight>
    </StatusBar>

    <Taskbar>
      <Weather>
        <WeatherIcon>
          <svg width="32" height="38" viewBox="0 0 32 38" style={{ position: 'absolute', left: 0, top: 0 }}>
            <path d="M15 4c1-1 3-1 4 0l12 26c1 2 0 4-2 4H2c-2 0-3-2-2-4z" fill="#e0620d" />
            <path d="M16 16v12" stroke="#fff" strokeWidth="4" strokeLinecap="round" />
            <path d="M7 25h4" stroke="#fff" strokeWidth="3" />
          </svg>
          <RedBadge $bg="#c42b1c">2</RedBadge>
        </WeatherIcon>
        <WeatherText>
          <span>تحذير حرارة</span>
          <WeatherSub>قيد الحدوث</WeatherSub>
        </WeatherText>
      </Weather>
      <Slot><TaskWin /></Slot>
      <SearchPill>
        <MagIcon s={20} />Search
        <PillArt><BingArt /></PillArt>
      </SearchPill>
      <Slot $w={59}><TaskView /></Slot>
      <Slot><Copilot /></Slot>
      <Slot><Folder /><Pip /></Slot>
      <Slot><Edge /><Pip /></Slot>
      <Slot><Store /><BlueBadge $bg="#0f6cbd">1</BlueBadge></Slot>
      <Slot><VsIcon /></Slot>
      <Slot><Calc /></Slot>
      <Slot $active><ExcelGlyph s={30} /><Pip $on /></Slot>
      <Slot><Ps /></Slot>
      <Slot><Notepad /><Pip /></Slot>
      <Slot><Paint /><Pip /></Slot>
      <Tray>
        <TrayItem $w={33}><svg width="14" height="9" viewBox="0 0 14 9" fill="none" stroke="#222" strokeWidth="1.500"><path d="M1 8l6-6 6 6" /></svg></TrayItem>
        <TrayItem $w={62}>ENG</TrayItem>
        <TrayItem $w={32}>
          <svg width="18" height="16" viewBox="0 0 18 16" fill="none" stroke="#333" strokeWidth="1.200"><path d="M1 5c4.500-4 11.500-4 16 0M4 8.500c3-2.500 7-2.500 10 0M7 11.500c1.200-1 2.800-1 4 0" /><circle cx="9" cy="14" r="1" fill="#333" /></svg>
        </TrayItem>
        <TrayItem $w={28}>
          <svg width="20" height="18" viewBox="0 0 20 18" fill="none" stroke="#333" strokeWidth="1.200"><path d="M1 6h3l5-4v14l-5-4H1zM12 5c2 2 2 6 0 8M15 3c3 3 3 9 0 12" /></svg>
        </TrayItem>
        <TrayItem $w={30}>
          <svg width="20" height="18" viewBox="0 0 20 18" fill="none" stroke="#222" strokeWidth="1.300"><rect x="2" y="5" width="16" height="11" rx="2" /><path d="M10 1v9M7 7l3 3 3-3" strokeWidth="2" /></svg>
        </TrayItem>
        <Clock>
          <ClockLine>1:26 PM</ClockLine>
          <ClockLine>19-Aug-2025</ClockLine>
        </Clock>
      </Tray>
    </Taskbar>

    <Watermark>
      <WmAr>مستقل</WmAr>
      <WmEn>mostaql.com</WmEn>
    </Watermark>
  </Page>
);

export default App;
